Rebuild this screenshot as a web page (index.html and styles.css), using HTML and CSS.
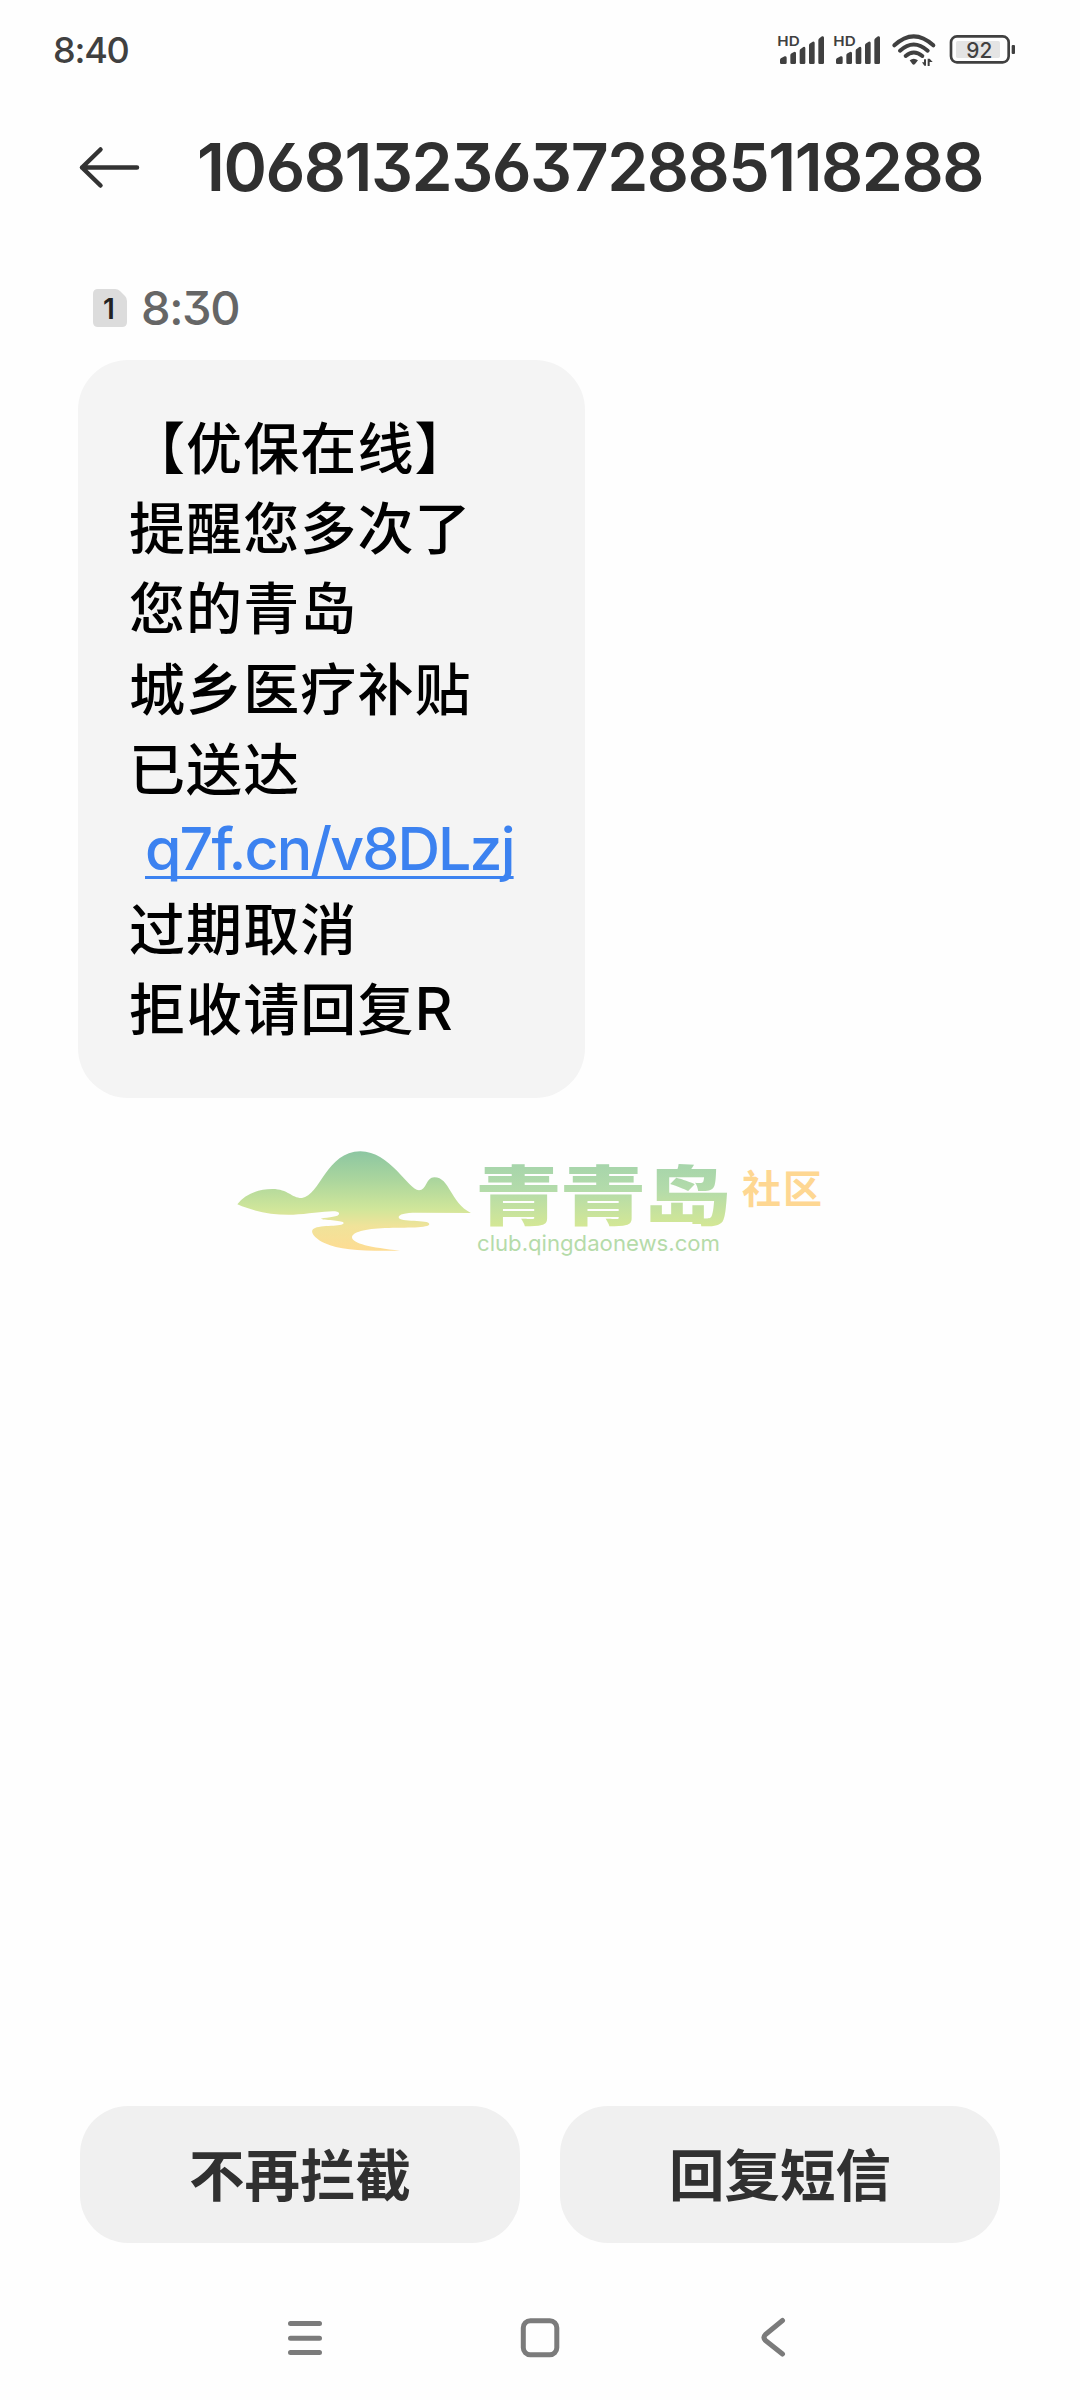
FILE: index.html
```html
<!DOCTYPE html>
<html lang="zh-CN">
<head>
<meta charset="utf-8">
<title>106813236372885118288</title>
<link rel="stylesheet" href="styles.css">
</head>
<body>
<div class="screen">
  <header class="status">
    <span class="clock">8:40</span>
    <svg class="status-icons" width="250" height="60" viewBox="0 0 750 180">
      <defs>
        <g id="signal">
          <text class="hd" x="52" y="77" textLength="67" lengthAdjust="spacingAndGlyphs">HD</text>
          <path d="M60 128v-8q0-4 4-6l10-5q6-2 6 4v15q0 4-4 4H64q-4 0-4-4ZM91 128v-22q0-4 4-6l7-4q6-2 6 4v28q0 4-4 4h-9q-4 0-4-4ZM119 128V92q0-4 4-6l7-5q6-2 6 4v43q0 4-4 4h-9q-4 0-4-4ZM147 128V76q0-4 4-6l7-5q6-2 6 4v59q0 4-4 4h-9q-4 0-4-4ZM175 128V61q0-5 4-7l7-5q6-2 6 4v75q0 4-4 4h-9q-4 0-4-4Z"/>
        </g>
      </defs>
      <use href="#signal"/>
      <use href="#signal" x="168"/>
      <g class="wifi">
        <path d="M403 76Q461 22 520 76"/>
        <path d="M420 92Q461 55 503 92"/>
        <path d="M437 108Q461 87 487 108"/>
      </g>
      <path d="M449 121Q461 111 474 121L465 132Q461 136 457 132Z"/>
      <path d="M493 137L486 127h6v-9h6v19ZM503 116h6v22h-6ZM509 116l9 10h-9Z"/>
      <rect class="charge" x="588" y="63" width="132" height="51" rx="5"/>
      <rect class="battery" x="573" y="49" width="173" height="78" rx="18"/>
      <rect x="755" y="75" width="10" height="27" rx="3"/>
      <text class="percent" x="619" y="113" textLength="78" lengthAdjust="spacingAndGlyphs">92</text>
    </svg>
  </header>

  <div class="titlebar">
    <svg class="back" width="64" height="48" viewBox="0 0 64 48"><path d="M60 24.500H5M23.500 6.500L5 24.500L23.500 42.500"/></svg>
    <h1 class="number">106813236372885118288</h1>
  </div>

  <main class="thread">
    <div class="stamp">
      <svg class="sim" width="34" height="38" viewBox="0 0 34 38">
        <path d="M5 0H22Q25 0 27 2L32 7Q34 9 34 12V33Q34 38 29 38H5Q0 38 0 33V5Q0 0 5 0Z"/>
        <text x="10" y="30">1</text>
      </svg>
      <span class="time">8:30</span>
    </div>
    <div class="bubble">
      <p>【优保在线】</p>
      <p>提醒您多次了</p>
      <p>您的青岛</p>
      <p>城乡医疗补贴</p>
      <p>已送达</p>
      <p class="link-line"><a class="link">q7f.cn/v8DLzj</a></p>
      <p>过期取消</p>
      <p>拒收请回复<span class="latin">R</span></p>
    </div>
    <svg class="brand" width="600" height="120" viewBox="0 0 600 120">
      <defs>
        <linearGradient id="hill" gradientUnits="userSpaceOnUse" x1="0" y1="60" x2="0" y2="360">
          <stop offset="0" stop-color="#8cc6a2"/>
          <stop offset=".3" stop-color="#acd69d"/>
          <stop offset=".58" stop-color="#d0e69a"/>
          <stop offset=".75" stop-color="#f0e39a"/>
          <stop offset="1" stop-color="#fedc93"/>
        </linearGradient>
        <linearGradient id="word" gradientUnits="userSpaceOnUse" x1="0" y1="-54" x2="0" y2="6">
          <stop offset="0" stop-color="#a7d5ab"/>
          <stop offset=".4" stop-color="#b3dbaa"/>
          <stop offset="1" stop-color="#d3e796"/>
        </linearGradient>
      </defs>
      <path fill="url(#hill)" transform="scale(.33333)" d="M52 220C75 190 115 174 157 174C205 174 215 202 246 201C300 195 320 61 421 61C510 61 565 177 597 178C620 178 618 139 643 139C690 139 690 215 753 246L590 245C555 245 536 250 536 259C537 275 628 265 628 279C628 292 558 289 495 291C435 293 396 304 396 319C397 338 452 350 540 359C440 361 360 358 315 337C283 322 268 302 281 293C302 280 369 289 371 276C371 267 318 269 302 263C328 258 360 258 357 247C355 232 277 249 220 251C160 253 105 243 52 220Z"/>
      <text class="brand-name" transform="translate(255 88.500) scale(1.34 1)" textLength="191" lengthAdjust="spacing">青青岛</text>
      <text class="brand-url" x="257" y="119.500" textLength="243" lengthAdjust="spacingAndGlyphs">club.qingdaonews.com</text>
      <text class="brand-tag" x="522" y="72" textLength="80">社区</text>
    </svg>
  </main>

  <div class="actions">
    <button class="action">不再拦截</button>
    <button class="action">回复短信</button>
  </div>

  <nav class="nav">
    <svg width="40" height="44" viewBox="0 0 40 44"><path d="M4.500 6.500H33.500M4.500 21.200H33.500M4.500 35.500H33.500"/></svg>
    <svg width="40" height="44" viewBox="0 0 40 44"><rect x="3.300" y="3.700" width="33.500" height="34" rx="7"/></svg>
    <svg width="40" height="44" viewBox="0 0 40 44"><path d="M28.500 3.500L11.500 17.500Q8.500 20.500 11.500 23.500L28.500 37"/></svg>
  </nav>
</div>
</body>
</html>
```
FILE: styles.css
```css
* { box-sizing: border-box; }
body { margin: 0; background: #fefefe; }
p, h1 { margin: 0; }
.screen {
  width: 1080px; height: 2400px; display: flex; flex-direction: column;
  font-family: Inter, "Noto Sans CJK SC", sans-serif; color: #303030; overflow: hidden;
}
.status { height: 100px; padding: 20px 60px 0 53px; display: flex; justify-content: space-between; align-items: flex-start; }
.clock { font-size: 36px; line-height: 60px; font-weight: 450; letter-spacing: -1.2px; color: #404040; }
.status-icons { fill: #404040; overflow: visible; margin-right: 10px; }
.hd { font: 600 39px Inter, sans-serif; }
.percent { font: 500 65px Inter, sans-serif; }
.wifi { fill: none; stroke: #404040; stroke-width: 12; stroke-linecap: round; }
.battery { fill: none; stroke: #404040; stroke-width: 8; }
.charge { fill: #e4e4e4; }

.titlebar { height: 134px; padding-left: 77px; display: flex; align-items: center; gap: 56px; }
.back path { fill: none; stroke: #333; stroke-width: 4.5; stroke-linecap: round; stroke-linejoin: round; }
.number { font-size: 66px; line-height: 80px; font-weight: 600; font-feature-settings: "cv03", "cv04", "cv09"; letter-spacing: -1.5px; white-space: nowrap; }

.thread { flex: 1; display: flex; flex-direction: column; align-items: flex-start; padding-top: 44px; }
.stamp { height: 60px; display: flex; align-items: center; gap: 14px; margin-left: 93px; }
.sim { fill: #dcdcdc; }
.sim text { font: 600 28px Inter, sans-serif; fill: #222; }
.time { font-size: 47px; line-height: 60px; letter-spacing: -1.4px; color: #666; font-weight: 450; font-feature-settings: "cv09"; }
.bubble {
  margin: 22px 0 0 77.500px; width: 507px; height: 738px; padding: 45px 0 0 51.500px; border-radius: 50px;
  background: #f4f4f4; color: #000; font-family: "Noto Sans CJK SC", sans-serif;
  font-size: 56px; font-weight: 500; line-height: 80.200px; letter-spacing: 1.100px; white-space: nowrap;
}
.bubble p { height: 80.200px; }
.latin, .link { font-family: Inter, sans-serif; font-size: 59px; }
.link-line { padding-left: 16px; }
.link { color: #3c82f0; font-weight: 450; letter-spacing: -1.9px; text-decoration: underline; text-decoration-thickness: 3px; text-underline-offset: 6px; text-decoration-skip-ink: none; }

.brand { margin: 33px 0 0 220px; overflow: visible; }
.brand-name { font: 900 65px "Noto Sans CJK SC", sans-serif; fill: url(#word); }
.brand-url { font: 400 22px Inter, sans-serif; fill: #b5dba9; }
.brand-tag { font: 700 39px "Noto Sans CJK SC", sans-serif; fill: #fed792; }

.actions { display: flex; gap: 40px; padding: 0 80px; height: 137px; }
.action {
  flex: 1; border: 0; border-radius: 48px; background: #f0f0f0; color: #303030; padding: 0 0 6px;
  font-family: "Noto Sans CJK SC", sans-serif; font-size: 55.500px; font-weight: 700;
}
.nav { height: 157px; padding: 74px 286px 0; display: flex; justify-content: space-between; align-items: flex-start; }
.nav svg { fill: none; stroke: #7b7b7b; stroke-width: 5; stroke-linecap: round; stroke-linejoin: round; }
```
